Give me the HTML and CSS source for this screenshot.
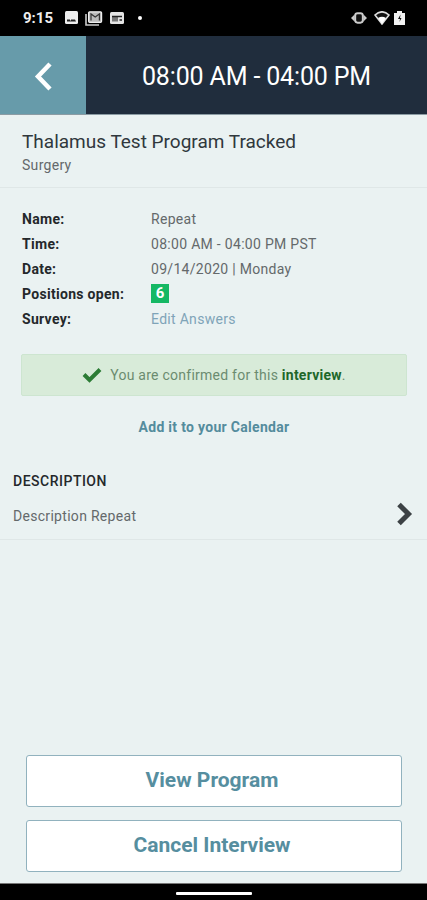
FILE: index.html
```html
<!DOCTYPE html>
<html lang="en">
<head>
    <meta charset="utf-8">
    <meta name="viewport" content="width=device-width, initial-scale=1">
    <title>Interview</title>
    <link rel="stylesheet" href="styles.css">
</head>
<body>
    <div class="status-bar">
        <span class="clock">9:15</span>
        <svg class="icon-image" width="13" height="14" viewBox="0 0 13 14">
            <rect width="13" height="13" rx="1.5" fill="#eee"/>
            <path d="M2 10.500V8.500h3v1h1v-1h4l1 2z" fill="#222"/>
        </svg>
        <svg class="icon-mail" width="18" height="15" viewBox="0 0 18 15">
            <path d="M1 3v11h13" fill="none" stroke="#ccc" stroke-width="1.6"/>
            <rect x="3.6" y=".8" width="13" height="10.5" rx="1" fill="#bbb" stroke="#eee" stroke-width="1.2"/>
            <path d="M6 9.500V3l4.200 3L14.400 3v6.500" fill="none" stroke="#333" stroke-width="1.2"/>
        </svg>
        <svg class="icon-news" width="14" height="12" viewBox="0 0 14 12">
            <rect width="14" height="12" rx="1.5" fill="#e4e4e4"/>
            <rect x="2" y="4" width="6" height="5.500" fill="#777"/>
            <path d="M2 4.500h10M9.500 8h2.500" stroke="#222" stroke-width="1.400"/>
        </svg>
        <span class="dot"></span>
        <div class="status-right">
            <svg width="16" height="12" viewBox="0 0 17 12">
                <path d="M0 6l4-4v8zM17 6l-4-4v8z" fill="#ccc"/>
                <rect x="4.500" y="1" width="8" height="10" rx="2.5" fill="#111" stroke="#ccc" stroke-width="2"/>
            </svg>
            <svg class="icon-wifi" width="16" height="14" viewBox="0 0 16 14">
                <path d="M1 4q7-6.400 14 0L8 13z" fill="#111" stroke="#ddd" stroke-width="1.600"/>
                <path d="M4 7q4-2.500 8 0l-4 6z" fill="#fff"/>
            </svg>
            <svg class="icon-battery" width="11" height="14" viewBox="0 0 11 14">
                <path d="M0 2h3V0h5v2h3v12H0z" fill="#f2f2f2"/>
                <path d="M6.500 3.500L4 8h2l-.5 3L7.500 7H6z" fill="#111"/>
            </svg>
        </div>
    </div>

    <div class="header">
        <a class="back">
            <svg width="18" height="29" viewBox="0 0 18 29">
                <path d="M16 2L4 14.500 16 27" fill="none" stroke="#fff" stroke-width="4.500"/>
            </svg>
        </a>
        <h1>08:00 AM - 04:00 PM</h1>
    </div>

    <div class="program">
        <h2>Thalamus Test Program Tracked</h2>
        <p>Surgery</p>
    </div>

    <dl class="details">
        <dt>Name:</dt>
        <dd>Repeat</dd>
        <dt>Time:</dt>
        <dd>08:00 AM - 04:00 PM PST</dd>
        <dt>Date:</dt>
        <dd>09/14/2020 | Monday</dd>
        <dt>Positions open:</dt>
        <dd><span class="badge">6</span></dd>
        <dt>Survey:</dt>
        <dd><a class="survey">Edit Answers</a></dd>
    </dl>

    <div class="alert">
        <svg width="20" height="16" viewBox="0 0 20 16">
            <path d="M2 7.500l5.500 5.500L18 2.500" fill="none" stroke="#2c7c35" stroke-width="4"/>
        </svg>
        <span>You are confirmed for this <b>interview</b>.</span>
    </div>
    <a class="calendar">Add it to your Calendar</a>

    <div class="description">
        <div>
            <h3>DESCRIPTION</h3>
            <p>Description Repeat</p>
        </div>
        <svg width="16" height="24" viewBox="0 0 16 24">
            <path d="M2 2.500l9.500 9.500L2 21.500" fill="none" stroke="#3c4245" stroke-width="5"/>
        </svg>
    </div>

    <div class="actions">
        <button type="button">View Program</button>
        <button type="button">Cancel Interview</button>
    </div>

    <div class="nav-bar"><span></span></div>
</body>
</html>
```

FILE: styles.css
```css
* {
    box-sizing: border-box;
}

body {
    display: flex;
    flex-direction: column;
    height: 900px;
    margin: 0;
    font-family: Roboto, sans-serif;
    font-size: 14px;
    letter-spacing: 0.3px;
    color: #64696b;
    background-color: #eaf2f2;
}

h1, h2, h3, p, dl, dd {
    margin: 0;
}

.status-bar {
    display: flex;
    align-items: center;
    height: 36px;
    padding-left: 23px;
    background-color: #000;
    color: #eee;
}

.clock {
    width: 42px;
    font-size: 15px;
    font-weight: 700;
    letter-spacing: 0;
}

.icon-mail {
    margin-left: 7px;
}

.icon-news {
    margin-left: 7px;
}

.dot {
    width: 4px;
    height: 4px;
    margin-left: 14px;
    border-radius: 50%;
    background-color: #fff;
}

.status-right {
    display: flex;
    align-items: center;
    margin-left: auto;
    padding-right: 22px;
}

.icon-wifi {
    margin-left: 7px;
}

.icon-battery {
    margin-left: 4px;
}

.header {
    display: flex;
    height: 79px;
    background-color: #202d3d;
    border-bottom: 1px solid #8b9ca4;
}

.back {
    display: flex;
    align-items: center;
    width: 86px;
    padding-left: 34px;
    padding-top: 2px;
    background-color: #679baa;
}

.header h1 {
    flex: 1;
    line-height: 81px;
    text-align: center;
    font-size: 25px;
    font-weight: 400;
    letter-spacing: -0.15px;
    color: #fff;
}

.program {
    height: 73px;
    padding: 15px 22px 0;
    border-bottom: 1px solid #dfe7e7;
}

.program h2 {
    line-height: 24px;
    font-size: 19px;
    font-weight: 400;
    letter-spacing: 0;
    color: #30383d;
}

.program p {
    line-height: 22px;
}

.details {
    display: grid;
    grid-template-columns: 129px 1fr;
    grid-auto-rows: 25px;
    margin: 19px 22px 0;
    line-height: 25px;
}

.details dt {
    font-weight: 700;
    color: #24282b;
}

.badge {
    display: block;
    width: 18px;
    height: 19px;
    margin-top: 2px;
    line-height: 19px;
    text-align: center;
    font-size: 15px;
    font-weight: 700;
    letter-spacing: 0;
    color: #fff;
    background-color: #15b864;
}

.survey {
    color: #7fa4b8;
}

.alert {
    display: flex;
    align-items: center;
    justify-content: center;
    gap: 8px;
    height: 42px;
    margin: 22px 20px 0 21px;
    border: 1px solid #cde5d0;
    border-radius: 2px;
    background-color: #d8ebd9;
    letter-spacing: 0.25px;
    color: #6b8b70;
}

.alert b {
    color: #20672a;
}

.calendar {
    margin-top: 19px;
    padding-left: 1px;
    line-height: 24px;
    text-align: center;
    font-weight: 700;
    color: #548c9d;
}

.description {
    display: flex;
    align-items: flex-end;
    justify-content: space-between;
    height: 69px;
    margin-top: 32px;
    padding: 0 14px 13px 13px;
    border-bottom: 1px solid #dfe7e7;
}

.description h3 {
    margin-bottom: 15px;
    line-height: 20px;
    font-size: 14px;
    font-weight: 500;
    letter-spacing: 0.5px;
    color: #24282b;
}

.description p {
    line-height: 20px;
}

.actions {
    display: flex;
    flex-direction: column;
    gap: 13px;
    margin: auto 25px 11px 26px;
}

.actions button {
    height: 52px;
    padding: 0 4px 2px 0;
    border: 1px solid #91b2be;
    border-radius: 3px;
    background-color: #fff;
    font-family: inherit;
    font-size: 21px;
    font-weight: 700;
    letter-spacing: 0;
    color: #568e9f;
}

.nav-bar {
    display: flex;
    justify-content: center;
    height: 17px;
    padding-top: 8px;
    border-top: 1px solid #777;
    background-color: #000;
}

.nav-bar span {
    width: 76px;
    height: 3px;
    border-radius: 1px;
    background-color: #fff;
}
```
